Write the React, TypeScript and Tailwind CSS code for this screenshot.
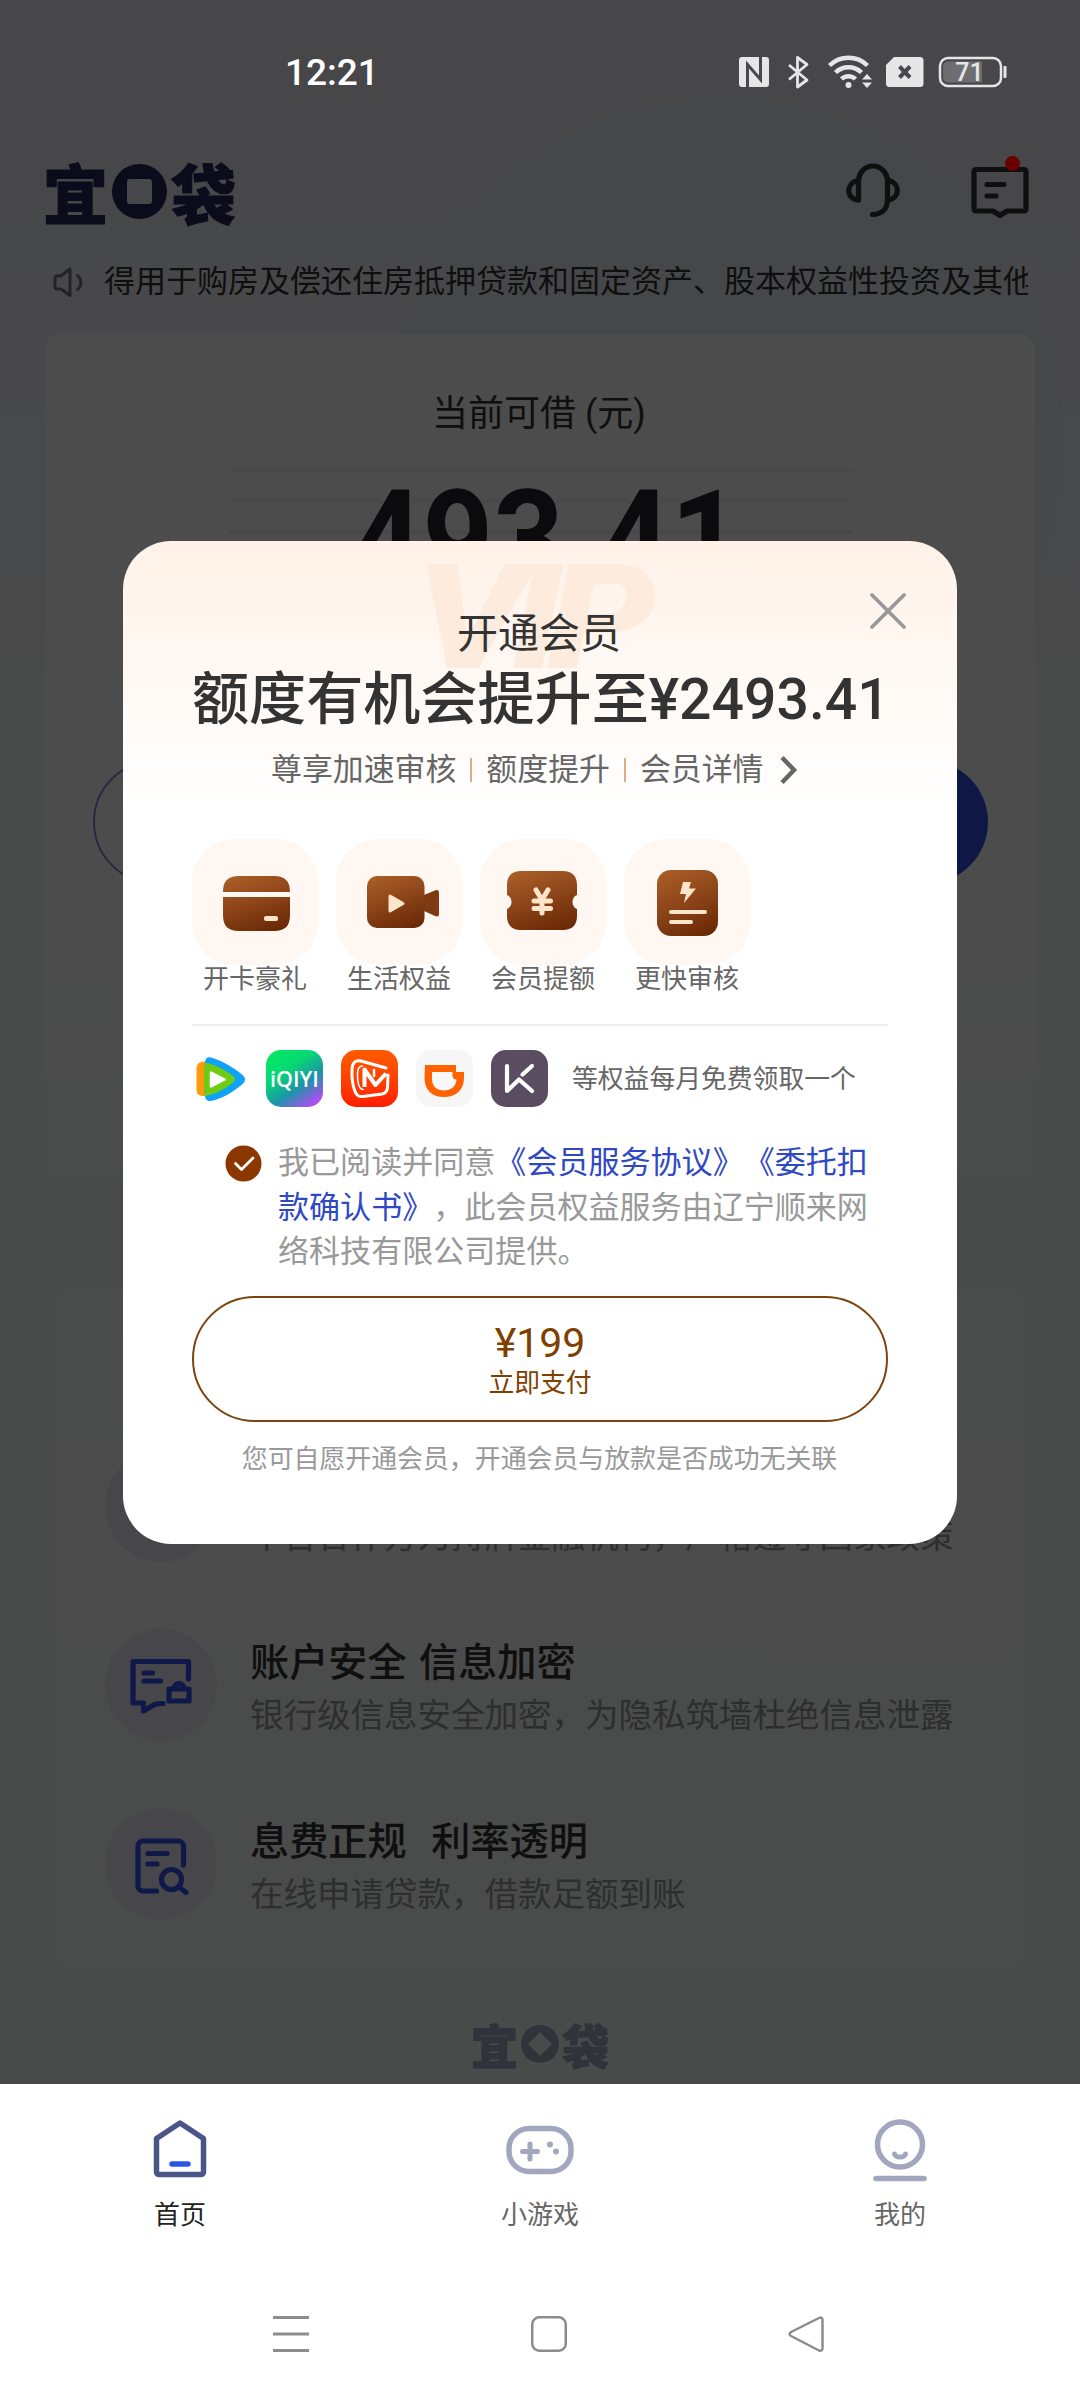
import { FC, ReactNode } from "react";

const BRAND_FONT = "font-['Noto_Sans_CJK_SC',sans-serif]";

type LogoProps = {
  className?: string;
  small?: boolean;
};

const Logo: FC<LogoProps> = ({ className = "", small = false }) => (
  <div className={`flex items-center ${BRAND_FONT} font-black [-webkit-text-stroke:1px_currentColor] ${className}`}>
    <span className={small ? "text-[47px] leading-[50px]" : "text-[65px] leading-[70px]"}>宜</span>
    {small ? (
      <svg className="mx-[3px] h-[38px] w-[38px]" viewBox="0 0 38 38">
        <path
          fillRule="evenodd"
          fill="currentColor"
          d="M19 0a19 19 0 1 1 0 38a19 19 0 1 1 0-38ZM19 7L7 19L19 31L31 19Z"
        />
      </svg>
    ) : (
      <svg className="mx-[4px] mt-[1px] h-[55px] w-[55px]" viewBox="0 0 55 55">
        <path
          fillRule="evenodd"
          fill="currentColor"
          d="M27.500 0a27.500 27.500 0 1 1 0 55a27.500 27.500 0 1 1 0-55ZM18 15a3 3 0 0 0-3 3V37a3 3 0 0 0 3 3H37a3 3 0 0 0 3-3V18a3 3 0 0 0-3-3Z"
        />
      </svg>
    )}
    <span className={small ? "text-[47px] leading-[50px]" : "text-[65px] leading-[70px]"}>袋</span>
  </div>
);

const StatusBar = () => (
  <div className="absolute left-0 top-0 z-20 flex h-[146px] w-full items-center pl-[285px] pr-[73px]">
    <span className="text-[37px] font-medium leading-[44px] text-white">12:21</span>
    <svg className="mb-[2px] ml-auto h-[36px] w-[270px]" viewBox="0 0 270 36" fill="none">
      {/* NFC */}
      <rect x="2" y="3" width="30" height="30" rx="3" fill="#e6e6e6" />
      <path d="M10.500 33V10.500L23.500 25.500V3" stroke="#48484b" strokeWidth="3" />
      {/* Bluetooth */}
      <path
        d="M52 11L70 26L60.500 33V3.500L70 10.500L52 25.500"
        stroke="#e6e6e6"
        strokeWidth="2.800"
        strokeLinejoin="round"
      />
      {/* Wi-Fi */}
      <path d="M92.500 11.500a27 27 0 0 1 38 0" stroke="#e6e6e6" strokeWidth="4.500" />
      <path d="M98.500 18.500a18.500 18.500 0 0 1 26 0" stroke="#e6e6e6" strokeWidth="4.500" />
      <path d="M104.500 25a10 10 0 0 1 14 0" stroke="#e6e6e6" strokeWidth="4.500" />
      <circle cx="111.500" cy="31" r="3" fill="#e6e6e6" />
      <path d="M125 25.500L130 20L135 25.500ZM125 28.500L130 34L135 28.500Z" fill="#e6e6e6" />
      {/* SIM */}
      <path d="M157 3H183a3.500 3.500 0 0 1 3.500 3.500V29.500a3.500 3.500 0 0 1-3.500 3.500H152.500a3.500 3.500 0 0 1-3.500-3.500V11Z" fill="#e6e6e6" />
      <path d="M162.500 12.500L173 23.500M173 12.500L162.500 23.500" stroke="#48484b" strokeWidth="4" />
      {/* Battery */}
      <rect x="203" y="4" width="61" height="28" rx="8" stroke="#e6e6e6" strokeWidth="2.500" />
      <path d="M211 7.500H245V28.500H211a5 5 0 0 1-5-5V12.500a5 5 0 0 1 5-5Z" fill="#6e6e71" />
      <rect x="266.500" y="12" width="3" height="12" rx="1" fill="#e6e6e6" />
      <text x="232.500" y="27" textAnchor="middle" fontSize="25" fontWeight="500" fill="#e6e6e6">
        71
      </text>
    </svg>
  </div>
);

const Header = () => (
  <div className="flex h-[226px] items-start justify-between pl-[43px] pr-[51px] pt-[156px]">
    <Logo className="text-[#222a5c]" />
    <div className="flex items-center gap-[71px] pt-[7px] text-[#333]">
      <svg className="h-[56px] w-[54px]" viewBox="0 0 54 56" fill="none" stroke="currentColor" strokeWidth="5.200" strokeLinecap="round" strokeLinejoin="round">
        <path d="M12.500 37V18.500a14.500 15.500 0 0 1 29 0V36C41.500 46 36 51.500 26.500 51.500" />
        <path d="M12.500 17C-0.500 20 -0.500 36 12.500 37M42 17C54.500 20 54.500 35 42 37" />
      </svg>
      <div className="relative">
        <svg className="h-[56px] w-[58px]" viewBox="0 0 58 56" fill="none" stroke="currentColor" strokeWidth="5.200" strokeLinecap="round" strokeLinejoin="round">
          <path d="M5 6.500H53a2 2 0 0 1 2 2V46a2 2 0 0 1-2 2H36L29 52.500L22 48H5a2 2 0 0 1-2-2V8.500a2 2 0 0 1 2-2Z" />
          <path d="M16 21.500H33M16 33H25" />
        </svg>
        <span className="absolute left-[34px] top-[-7px] z-20 h-[15px] w-[15px] rounded-full bg-[#6a0000]" />
      </div>
    </div>
  </div>
);

const Notice = () => (
  <div className="mt-[31px] flex h-[50px] items-center pl-[52px] pr-[52px]">
    <svg className="h-[32px] w-[32px] shrink-0 text-[#777]" viewBox="0 0 32 32" fill="none" stroke="currentColor" strokeWidth="3" strokeLinejoin="round" strokeLinecap="round">
      <path d="M3 12V21a2 2 0 0 0 2 2H9L18 29.500V3L9 10H5a2 2 0 0 0-2 2Z" />
      <path d="M25.500 9.500C30 13.500 30 19.500 25.500 23.500" />
    </svg>
    <p className="ml-[20px] flex-1 overflow-hidden whitespace-nowrap text-[31px] leading-[52px] text-[#333]">
      得用于购房及偿还住房抵押贷款和固定资产、股本权益性投资及其他
    </p>
  </div>
);

const LoanCard = () => (
  <div className="mx-[45px] mt-[27px] flex h-[955px] flex-col items-center rounded-[16px] bg-gradient-to-b from-white from-60% to-transparent to-90% pt-[55px]">
    <h2 className="pr-[2px] text-[36px] leading-[50px] text-[#333]">当前可借 (元)</h2>
    <div className="mt-[29px] grid w-[625px]">
      <div className="flex flex-col gap-[27px] [grid-area:1/1]">
        <span className="h-[4px] bg-[#f6f6fb]" />
        <span className="h-[4px] bg-[#f3f3f8]" />
        <span className="h-[4px] bg-[#f0f0f6]" />
      </div>
      <p className="ml-[12px] mt-[5px] scale-x-[0.92] text-center text-[134px] font-bold leading-[134px] text-[#25262d] [grid-area:1/1]">
        493.41
      </p>
    </div>
    <div className="mt-[153px] flex w-[895px] justify-between">
      <span className="h-[124px] w-[430px] rounded-full border-2 border-[#8488c8]" />
      <span className="h-[124px] w-[430px] rounded-full bg-[#3450e8]" />
    </div>
  </div>
);

type PromiseRowProps = {
  icon?: ReactNode;
  title?: string;
  desc: string;
};

const PromiseRow: FC<PromiseRowProps> = ({ icon, title, desc }) => (
  <div className="flex h-[112px]">
    <div className="flex h-[112px] w-[112px] items-center justify-center rounded-full bg-[#ececfb]">
      {icon}
    </div>
    <div className="ml-[33px] pt-[6px]">
      <h3 className="h-[56px] whitespace-pre text-[39.2px] font-medium leading-[56px] text-[#333] [word-spacing:2.5px]">
        {title}
      </h3>
      <p className="text-[33.5px] leading-[50px] text-[#999]">{desc}</p>
    </div>
  </div>
);

const SecureIcon = () => (
  <svg className="h-[64px] w-[64px] text-[#3050f5]" viewBox="0 0 64 64" fill="none" stroke="currentColor" strokeWidth="5.200" strokeLinecap="round" strokeLinejoin="round">
    <path d="M59.500 26V8.500H4V50H14.500V58L25.500 51.500C28 50.500 30 50.500 34 50.500" />
    <path d="M15 20H23.500M15 28H31.500" />
    <path d="M40 36H60V48H40ZM45 35.500a5 5 0 0 1 10 0" />
  </svg>
);

const ClearIcon = () => (
  <svg className="h-[64px] w-[64px] text-[#3050f5]" viewBox="0 0 64 64" fill="none" stroke="currentColor" strokeWidth="5.200" strokeLinecap="round" strokeLinejoin="round">
    <path d="M54.500 33V14a5 5 0 0 0-5-5H14a5 5 0 0 0-5 5V54a5 5 0 0 0 5 5H27.500" />
    <path d="M19 21.500H38M19 32H28" />
    <circle cx="42.500" cy="47.500" r="10" />
    <path d="M50.500 55.500L57 60.500" />
  </svg>
);

const Promises = () => (
  <div className="mx-[56px] flex h-[677px] flex-col gap-[67px] rounded-[16px] bg-gradient-to-b from-white/10 via-white/50 via-30% to-white/20 pl-[49px] pt-[161px]">
    <PromiseRow desc="平台合作方为持牌金融机构，严格遵守国家政策" />
    <PromiseRow icon={<SecureIcon />} title="账户安全 信息加密" desc="银行级信息安全加密，为隐私筑墙杜绝信息泄露" />
    <PromiseRow icon={<ClearIcon />} title="息费正规  利率透明" desc="在线申请贷款，借款足额到账" />
  </div>
);

const BrownGradient = ({ id }: { id: string }) => (
  <linearGradient id={id} x1="0.3" y1="0" x2="0.7" y2="1">
    <stop offset="0" stopColor="#a75b25" />
    <stop offset="0.5" stopColor="#8b4318" />
    <stop offset="1" stopColor="#6b2a06" />
  </linearGradient>
);

const features = [
  {
    label: "开卡豪礼",
    icon: (
      <>
        <path d="M31 53C31 42 36 37 47 37H82C93 37 98 42 98 53ZM31 58H98V76C98 87 93 92 82 92H47C36 92 31 87 31 76Z" fill="url(#f0)" />
        <rect x="72" y="77" width="14" height="5" rx="2" fill="#fde5cb" />
      </>
    ),
  },
  {
    label: "生活权益",
    icon: (
      <>
        <path d="M88 56L99 51.500C101.500 50.500 103 51.500 103 54V75C103 77.500 101.500 78 99 77L88 72Z" fill="#7d3a13" />
        <rect x="31" y="37" width="57.500" height="52" rx="10" fill="url(#f1)" />
        <path d="M54 57L67 64.500L54 72Z" fill="#fde5cb" stroke="#fde5cb" strokeWidth="3" strokeLinejoin="round" />
      </>
    ),
  },
  {
    label: "会员提额",
    icon: (
      <>
        <path d="M41 32H83C92 32 97 37 97 46V56C91 58 91 68 97 70V77C97 86 92 91 83 91H41C32 91 27 86 27 77V70C33 68 33 58 27 56V46C27 37 32 32 41 32Z" fill="url(#f2)" />
        <path d="M56 51L62 61L68 51M62 61V74M54 62H70.500M54 69.500H70.500" fill="none" stroke="#fde5cb" strokeWidth="5" strokeLinecap="round" />
      </>
    ),
  },
  {
    label: "更快审核",
    icon: (
      <>
        <rect x="33" y="31" width="61" height="66" rx="14" fill="url(#f3)" />
        <path d="M59 43H67L65 49.500H72L60 64L62 55H56Z" fill="#fde5cb" />
        <path d="M47 73H81M47 83H67" stroke="#fde5cb" strokeWidth="4" strokeLinecap="round" />
      </>
    ),
  },
];

const Features = () => (
  <div className="mt-[47px] flex gap-[18px]">
    {features.map((item, index) => (
      <div key={item.label} className="flex w-[126px] flex-col items-center">
        <div className="h-[126px] w-[126px] rounded-[42px] bg-[#fff7f2]">
          <svg viewBox="0 0 126 126">
            <defs>
              <BrownGradient id={`f${index}`} />
            </defs>
            {item.icon}
          </svg>
        </div>
        <span className="text-[26px] leading-[28px] text-[#666]">{item.label}</span>
      </div>
    ))}
  </div>
);

const PartnerApps = () => (
  <div className="ml-[-1px] mt-[24px] flex h-[57px] items-center">
    <div className="flex gap-[18px]">
      {/* Tencent Video */}
      <svg className="h-[57px] w-[57px]" viewBox="0 0 57 57">
        <path d="M13 11.500C8 12 5.500 14 5.500 19V39C5.500 44 7.500 46 13 46L20 44V13Z" fill="#ff9a0a" />
        <path d="M20 7.500C30 10.500 41 16 51 24.500C55 28 55 31 51 34.500C41 43 31 48.500 20 51C16.500 51.500 14.500 50 14 46C12.500 35 12.500 23 14 12C14.500 8 16.500 6.500 20 7.500Z" fill="#0ea2f8" />
        <path d="M14 12.500C24 14.500 34 19.500 42 26C44.500 28 44.500 30.500 42 32.500C34 39 24 44.500 14 46C12.500 35 12.500 23.500 14 12.500Z" fill="#6fcb14" />
        <path d="M20 22.500L33.500 29.500L20 36.500Z" fill="#fff" stroke="#fff" strokeWidth="2.500" strokeLinejoin="round" />
      </svg>
      {/* iQIYI */}
      <div className="flex h-[57px] w-[57px] items-center justify-center rounded-[15px] bg-[linear-gradient(145deg,#03ec62_0%,#07d873_35%,#1b95a8_62%,#b04df2_90%)]">
        <span className="font-['Open_Sans',sans-serif] text-[21.500px] font-semibold leading-[24px] tracking-[0px] text-white">iQIYI</span>
      </div>
      {/* Mango TV */}
      <svg className="h-[57px] w-[57px] rounded-[15px] bg-gradient-to-b from-[#ff5a00] to-[#ff1a00]" viewBox="0 0 57 57" fill="none" stroke="#fff" strokeLinecap="round" strokeLinejoin="round">
        <path d="M45 18L20 11C14 10 11 13 11 20C10.500 27 11.500 34 13.500 40C15 45 17 47 22 46.500L41 44C44 43.500 46 41 46.500 38L47 25" strokeWidth="3" />
        <path d="M21.500 16C17.500 16 16.500 19 16.500 24C16.500 32 17.500 39 22 39.500" strokeWidth="1.600" />
        <path d="M23.500 37V19.500L34.500 35L45 23.500" strokeWidth="4" strokeLinecap="butt" />
        <path d="M33 20V26" strokeWidth="2.500" />
      </svg>
      {/* DiDi */}
      <svg className="h-[57px] w-[57px] rounded-[15px] bg-[#f6f6f6]" viewBox="0 0 57 57">
        <path d="M9 15H40V22H48V28C48 40 40 47 28 47C16 47 8.500 40 8.500 28Z" fill="#ff6200" />
        <path d="M16 22H36.500V25.500C36.500 28 38 29.500 40.500 29.500C40 36.500 35 40.500 28 40.500C20.500 40.500 16 36 16 29Z" fill="#f8f8f8" />
      </svg>
      {/* Keep */}
      <svg className="h-[57px] w-[57px] rounded-[15px] bg-[#5a4d61]" viewBox="0 0 57 57" fill="none" stroke="#fff" strokeWidth="4.200" strokeLinecap="round" strokeLinejoin="round">
        <path d="M16 16V41L28 29.500L41 41" />
        <path d="M41 16L31.500 24.500" />
      </svg>
    </div>
    <span className="ml-[24px] whitespace-nowrap text-[25.8px] leading-[36px] text-[#666]">
      等权益每月免费领取一个
    </span>
  </div>
);

const MemberModal = () => (
  <div className="absolute left-[123px] top-[541px] z-20 flex h-[1003px] w-[834px] flex-col overflow-hidden rounded-[48px] bg-white bg-gradient-to-b from-[#fff2e8] to-white to-[27%] px-[69px] pt-[65px]">
    {/* Watermark behind the heading */}
    <span className="absolute left-[292px] top-[9px] origin-left scale-x-[1.18] text-[146px] font-black italic leading-[138px] tracking-[-12px] text-[#fdebdd]">
      VIP
    </span>
    <button className="absolute right-[49px] top-[50px]">
      <svg className="h-[40px] w-[40px]" viewBox="0 0 40 40" stroke="#999" strokeWidth="3.800" strokeLinecap="round">
        <path d="M4 4L36 36M36 4L4 36" />
      </svg>
    </button>

    <div className="relative text-center text-[#333]">
      <h2 className="pr-[2px] text-[41px] leading-[56px]">开通会员</h2>
      <h1 className="mt-[2px] whitespace-nowrap text-[57.1px] font-medium leading-[72px]">
        额度有机会提升至¥2493.41
      </h1>
    </div>

    <div className="mt-[12px] flex h-[44px] items-center pl-[79px] text-[30.9px] leading-[44px] text-[#666]">
      <span>尊享加速审核</span>
      <i className="mx-[14px] h-[24px] w-[2px] bg-[#dcae85]" />
      <span>额度提升</span>
      <i className="mx-[14px] h-[24px] w-[2px] bg-[#dcae85]" />
      <span>会员详情</span>
      <svg className="ml-[15px] h-[30px] w-[20px]" viewBox="0 0 20 30" fill="none" stroke="#666" strokeWidth="4.500">
        <path d="M3 2.500L15 15L3 27.500" />
      </svg>
    </div>

    <Features />
    <div className="mt-[31px] h-[2px] shrink-0 bg-[#eee]" />
    <PartnerApps />

    {/* Agreement */}
    <div className="mt-[34px] flex pl-[33px]">
      <svg className="mt-[4px] h-[37px] w-[37px] shrink-0" viewBox="0 0 37 37" fill="none">
        <circle cx="18.500" cy="18.500" r="18" fill="#8a3700" />
        <path d="M10.500 18.500L16.500 24.500L28 13" stroke="#fff" strokeWidth="2.800" strokeLinecap="round" strokeLinejoin="round" />
      </svg>
      <p className="ml-[16px] w-[592px] shrink-0 text-[31.050px] leading-[44.500px] text-[#999] [text-spacing-trim:space-all]">
        我已阅读并同意<span className="text-[#2f48c4]">《会员服务协议》《委托扣<br />款确认书》</span>，此会员权益服务由辽宁顺来网<br />络科技有限公司提供。
      </p>
    </div>

    <button className="mt-[21px] flex h-[126px] shrink-0 flex-col items-center rounded-full border-2 border-[#7c430f] pt-[21px] text-[#7f3f00]">
      <span className="text-[41px] leading-[48px]">¥199</span>
      <span className="text-[25.800px] leading-[32px]">立即支付</span>
    </button>
    <p className="mt-[19px] whitespace-nowrap pr-[1px] text-center text-[25.900px] leading-[36px] text-[#999]">
      您可自愿开通会员，开通会员与放款是否成功无关联
    </p>
  </div>
);

const TabBar = () => (
  <div className="grid h-[166px] grid-cols-3 text-center text-[26px] leading-[36px] text-[#666]">
    <div className="flex flex-col items-center pt-[34px]">
      <svg className="h-[64px] w-[72px]" viewBox="0 0 72 64" fill="none" strokeLinejoin="round" strokeLinecap="round">
        <path d="M36 5L12.500 20.500V54a2.500 2.500 0 0 0 2.500 2.500H57a2.500 2.500 0 0 0 2.500-2.500V20.500Z" stroke="#4a5688" strokeWidth="5.500" />
        <path d="M28 46H44" stroke="#2c55e6" strokeWidth="5.500" />
      </svg>
      <span className="mt-[15px] text-[#222]">首页</span>
    </div>
    <div className="flex flex-col items-center pt-[34px]">
      <svg className="h-[64px] w-[72px]" viewBox="0 0 72 64" fill="none" stroke="#a3a6bf" strokeLinecap="round">
        <rect x="5" y="10.500" width="62" height="43" rx="20" strokeWidth="5.500" />
        <path d="M26 26V41M18.500 33.500H33.500" strokeWidth="5" />
        <circle cx="46" cy="26.500" r="3" fill="#a3a6bf" stroke="none" />
        <circle cx="52" cy="33.500" r="3" fill="#a3a6bf" stroke="none" />
      </svg>
      <span className="mt-[15px]">小游戏</span>
    </div>
    <div className="flex flex-col items-center pt-[34px]">
      <svg className="h-[64px] w-[72px]" viewBox="0 0 72 64" fill="none" stroke="#a3a6bf" strokeLinecap="round">
        <circle cx="36" cy="26.500" r="22.500" strokeWidth="5.500" />
        <path d="M30.500 36a5.500 3 0 0 0 11 0" strokeWidth="5" strokeLinejoin="round" />
        <path d="M12 60.500H60" strokeWidth="5.500" />
      </svg>
      <span className="mt-[15px]">我的</span>
    </div>
  </div>
);

const SystemNav = () => (
  <div className="flex h-[150px] items-center justify-between pl-[273px] pr-[256px] pt-[18px]">
    <svg className="h-[36px] w-[36px]" viewBox="0 0 36 36" stroke="#8c8c8c" strokeWidth="2.800">
      <path d="M0 1.500H36M0 18H36M0 34.500H36" />
    </svg>
    <svg className="h-[36px] w-[36px]" viewBox="0 0 36 36" fill="none" stroke="#8c8c8c" strokeWidth="2.500">
      <rect x="1.250" y="1.250" width="33.500" height="33.500" rx="7" />
    </svg>
    <svg className="h-[36px] w-[36px]" viewBox="0 0 36 36" fill="none" stroke="#8c8c8c" strokeWidth="2.500" strokeLinejoin="round">
      <path d="M31 2L3 16C1.200 17 1.200 19 3 20L31 34.500C33 35 34.500 34.500 34.500 32.500V4C34.500 2 33 1 31 2Z" />
    </svg>
  </div>
);

export default function App() {
  return (
    <div className="relative h-[2400px] w-[1080px] overflow-hidden bg-white font-[Roboto,'Noto_Sans_CJK_SC',sans-serif]">
      <div className="relative h-[2084px] overflow-hidden bg-gradient-to-b from-[#edecf8] via-[#f6fbf9] via-45% to-[#f6fbf9]">
        {/* Soft bubble in the page background */}
        <div className="absolute left-[384px] top-[98px] h-[680px] w-[680px] rounded-full bg-[#e6eafa]/35" />
        <div className="relative">
          <Header />
          <Notice />
          <LoanCard />
          <Promises />
          <Logo small className="mt-[53px] justify-center text-[#a4a7c4]" />
        </div>
      </div>
      <TabBar />
      <SystemNav />

      {/* Mask */}
      <div className="absolute left-0 top-0 z-10 h-[2084px] w-full bg-black/70" />
      <StatusBar />
      <MemberModal />
    </div>
  );
}
